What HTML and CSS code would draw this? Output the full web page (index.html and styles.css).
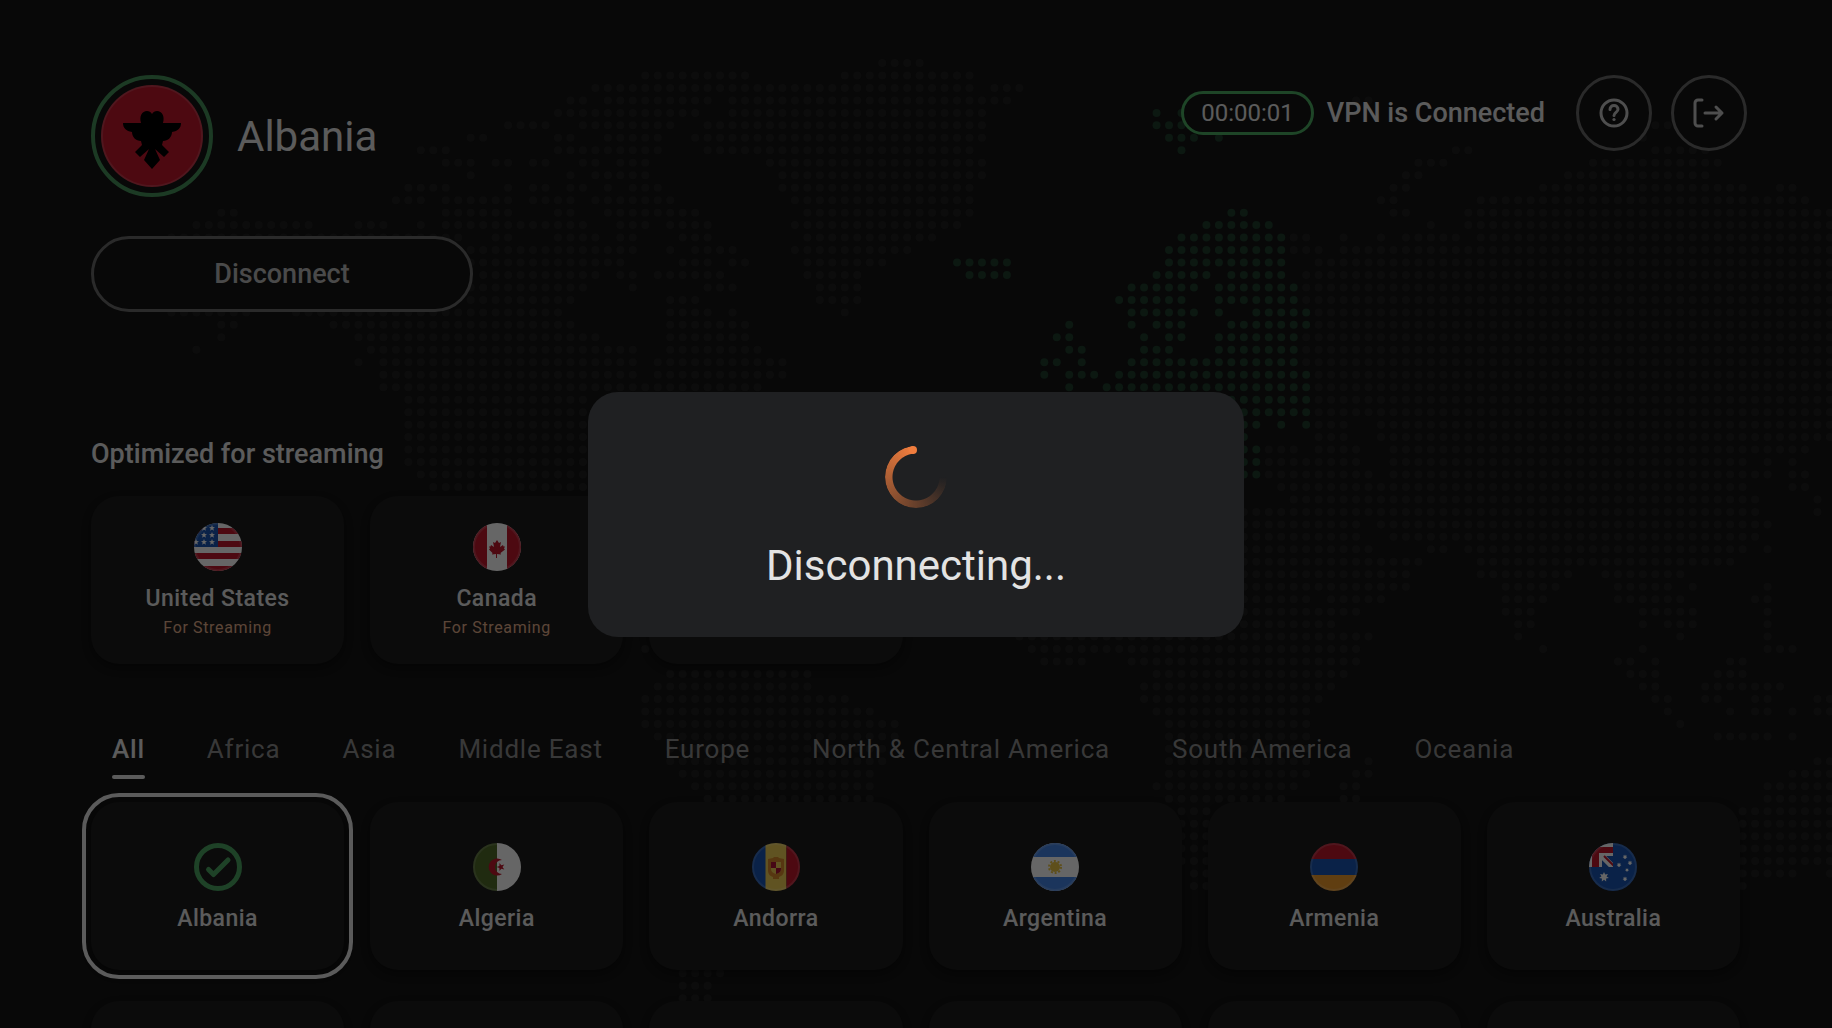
FILE: index.html
```
<!DOCTYPE html>
<html lang="en">
<head>
    <meta charset="utf-8">
    <title>VPN</title>
    <link rel="stylesheet" href="styles.css">
</head>
<body>
    <svg id="map" viewBox="0 0 1832 1028" preserveAspectRatio="xMidYMin slice" aria-hidden="true"></svg>

    <main class="screen">
        <header class="top">
            <div class="location">
                <div class="ring">
                    <svg class="flag-big" viewBox="0 0 102 102">
                        <circle cx="51" cy="51" r="51" fill="#c0172c"/>
                        <path d="M22 38h18c-2-7 1-12 6-12 2 0 4 1 5 3 1-2 3-3 5-3 5 0 8 5 6 12h18c0 5-3 8-9 9 0 5-4 9-9 9l-1 4 7 7-5 5-9-8 5 11-8 9-8-9 5-11-9 8-5-5 7-7-1-4c-5 0-9-4-9-9-6-1-9-4-9-9z"/>
                        <circle cx="51" cy="51" r="50" fill="none" stroke="#fff" stroke-opacity=".15" stroke-width="2"/>
                    </svg>
                </div>
                <h1>Albania</h1>
            </div>
            <div class="status">
                <span class="timer">00:00:01</span>
                <span class="state">VPN is Connected</span>
                <button class="round" aria-label="Help">
                    <svg width="32" height="32" viewBox="0 0 32 32">
                        <circle cx="16" cy="16" r="13"/>
                        <path d="M12 12.500c0-2.500 1.800-4 4-4s4 1.500 4 3.700c0 3-4 3.300-4 6.300"/>
                        <circle class="dot" cx="16" cy="22.500" r="1.600"/>
                    </svg>
                </button>
                <button class="round" aria-label="Log out">
                    <svg width="32" height="32" viewBox="0 0 32 32">
                        <path d="M9 3H5a3 3 0 0 0-3 3v20a3 3 0 0 0 3 3h4M12 16h17M23 10l6 6-6 6"/>
                    </svg>
                </button>
            </div>
        </header>

        <button class="disconnect">Disconnect</button>

        <h2>Optimized for streaming</h2>
        <div class="grid streaming">
            <button class="card">
                <svg class="flag" viewBox="0 0 48 48">
                    <g clip-path="url(#disc)">
                        <path fill="#fff" d="M0 0h48v48H0z"/>
                        <path fill="#c0172c" d="M0 5h48v6H0zM0 18h48v6H0zM0 30h48v6H0zM0 43h48v5H0z"/>
                        <path fill="#1955b4" d="M0 0h24v24H0z"/>
                        <g fill="#fff">
                            <use href="#star" x="10" y="5"/><use href="#star" x="18" y="5"/>
                            <use href="#star" x="10" y="12"/><use href="#star" x="18" y="12"/>
                            <use href="#star" x="2" y="19"/><use href="#star" x="10" y="19"/><use href="#star" x="18" y="19"/>
                        </g>
                    </g>
                    <circle class="rim" cx="24" cy="24" r="23"/>
                </svg>
                <span class="name">United States</span>
                <span class="note">For Streaming</span>
            </button>
            <button class="card">
                <svg class="flag" viewBox="0 0 48 48">
                    <g clip-path="url(#disc)">
                        <path fill="#fff" d="M0 0h48v48H0z"/>
                        <path fill="#c0172c" d="M0 0h14v48H0zM34 0h14v48H34z"/>
                        <path fill="#c0172c" d="M24 17l2 3 2-1-1 5 3-2 .5 1.500 1.500 0-1 2 1 1-4.500 3.500.5 1.500-4-.5v4h-1v-4l-4 .5.5-1.500L16 26.500l1-1-1-2h1.500L18 22l3 2-1-5 2 1z"/>
                    </g>
                    <circle class="rim" cx="24" cy="24" r="23"/>
                </svg>
                <span class="name">Canada</span>
                <span class="note">For Streaming</span>
            </button>
            <button class="card">
                <svg class="flag" viewBox="0 0 48 48">
                    <g clip-path="url(#disc)">
                        <path fill="#1955b4" d="M0 0h48v48H0z"/>
                        <path stroke="#fff" stroke-width="8" d="M0 0l48 48M48 0L0 48M24 0v48M0 24h48"/>
                        <path stroke="#c0172c" stroke-width="4" d="M24 0v48M0 24h48"/>
                    </g>
                </svg>
                <span class="name">United Kingdom</span>
                <span class="note">For Streaming</span>
            </button>
        </div>

        <nav class="tabs">
            <a class="active" href="#">All</a>
            <a href="#">Africa</a>
            <a href="#">Asia</a>
            <a href="#">Middle East</a>
            <a href="#">Europe</a>
            <a href="#">North &amp; Central America</a>
            <a href="#">South America</a>
            <a href="#">Oceania</a>
        </nav>

        <div class="grid">
            <button class="card selected">
                <svg class="flag" viewBox="0 0 48 48" fill="none" stroke="#4ba562" stroke-linecap="round" stroke-linejoin="round">
                    <circle cx="24" cy="24" r="21.500" stroke-width="5"/>
                    <path stroke-width="5" d="M14.500 26.500l5 5L34 17"/>
                </svg>
                <span class="name">Albania</span>
            </button>
            <button class="card">
                <svg class="flag" viewBox="0 0 48 48">
                    <g clip-path="url(#disc)">
                        <path fill="#506b2a" d="M0 0h24v48H0z"/>
                        <path fill="#fff" d="M24 0h24v48H24z"/>
                        <path fill="#c0172c" d="M29 17a8.500 8.500 0 1 0 0 14 7 7 0 1 1 0-14z"/>
                        <path fill="#c0172c" d="M26.500 20l1.800 2.300 3-.8-1.800 2.500 1.800 2.500-3-.8-1.800 2.300-.1-3-2.900-1 2.900-1z"/>
                    </g>
                    <circle class="rim" cx="24" cy="24" r="23"/>
                </svg>
                <span class="name">Algeria</span>
            </button>
            <button class="card">
                <svg class="flag" viewBox="0 0 48 48">
                    <g clip-path="url(#disc)">
                        <path fill="#1955b4" d="M0 0h14v48H0z"/>
                        <path fill="#f0d056" d="M13.500 0h21v48h-21z"/>
                        <path fill="#c0172c" d="M34.500 0H48v48H34.500z"/>
                        <path fill="#d98a2b" d="M21 15l1-1h4l1 1 5 1v11c0 4-2 6-5 7v2h-6v-2c-3-1-5-3-5-7V16z"/>
                        <path fill="#f0d056" d="M19 19h10v7c0 3-2 4-5 5-3-1-5-2-5-5z"/>
                        <path fill="#b01335" d="M19 19h5v6h-5zM24 25h5v1c0 3-2 4-5 5z"/>
                    </g>
                    <circle class="rim" cx="24" cy="24" r="23"/>
                </svg>
                <span class="name">Andorra</span>
            </button>
            <button class="card">
                <svg class="flag" viewBox="0 0 48 48">
                    <g clip-path="url(#disc)">
                        <path fill="#fff" d="M0 0h48v48H0z"/>
                        <path fill="#4585e6" d="M0 0h48v14H0zM0 34h48v14H0z"/>
                        <circle cx="24" cy="24" r="5" fill="#ecc544"/>
                        <circle cx="24" cy="24" r="6" fill="none" stroke="#ecc544" stroke-width="2" stroke-dasharray="2 1.770"/>
                    </g>
                    <circle class="rim" cx="24" cy="24" r="23"/>
                </svg>
                <span class="name">Argentina</span>
            </button>
            <button class="card">
                <svg class="flag" viewBox="0 0 48 48">
                    <g clip-path="url(#disc)">
                        <path fill="#c0172c" d="M0 0h48v16H0z"/>
                        <path fill="#1955b4" d="M0 16h48v16H0z"/>
                        <path fill="#f09c2c" d="M0 32h48v16H0z"/>
                    </g>
                    <circle class="rim" cx="24" cy="24" r="23"/>
                </svg>
                <span class="name">Armenia</span>
            </button>
            <button class="card">
                <svg class="flag" viewBox="0 0 48 48">
                    <g clip-path="url(#disc)">
                        <path fill="#1955b4" d="M0 0h48v48H0z"/>
                        <path fill="#fff" d="M0 0h24v13H13v11H0z"/>
                        <path fill="#c0172c" d="M3 4h21v6H10v14H3z"/>
                        <path stroke="#fff" stroke-width="6" d="M12 12l12 12"/>
                        <path fill="#fff" d="M10 10h14v3H13v11h-3z"/>
                        <path stroke="#c0172c" stroke-width="2" d="M15 13l10 10"/>
                        <path fill="#1955b4" d="M24 10h4v18H10v-4h14z"/>
                        <g fill="#fff">
                            <use href="#star7" transform="translate(15 34)"/>
                            <use href="#star7" transform="translate(36 14) scale(.5)"/>
                            <use href="#star7" transform="translate(30 22) scale(.5)"/>
                            <use href="#star7" transform="translate(41 20) scale(.5)"/>
                            <use href="#star7" transform="translate(38 27) scale(.4)"/>
                            <use href="#star7" transform="translate(36 36) scale(.5)"/>
                        </g>
                    </g>
                    <circle class="rim" cx="24" cy="24" r="23"/>
                </svg>
                <span class="name">Australia</span>
            </button>
            <div class="card"></div>
            <div class="card"></div>
            <div class="card"></div>
            <div class="card"></div>
            <div class="card"></div>
            <div class="card"></div>
        </div>
    </main>

    <div class="overlay">
        <div class="dialog" role="alertdialog" aria-labelledby="message">
            <div class="spinner"></div>
            <p id="message">Disconnecting...</p>
        </div>
    </div>

    <!-- shared flag parts -->
    <svg class="defs" width="0" height="0">
        <defs>
            <clipPath id="disc"><circle cx="24" cy="24" r="24"/></clipPath>
            <path id="star" d="M0-3l.8 2.100 2.200.1-1.700 1.400.6 2.200L0 1.600l-1.900 1.200.6-2.200L-3-.8l2.200-.1z"/>
            <path id="star7" d="M0-5l1.200 2.600 2.700-.7-1.300 2.500L4.900 1.100l-2.800.5.1 2.900L0 2.700l-2.200 1.800.1-2.900-2.800-.5 2.300-1.700-1.300-2.500 2.700.7z"/>
        </defs>
    </svg>

    <script src="map.js"></script>
</body>
</html>
```
FILE: styles.css
```
* {
    box-sizing: border-box;
}

body {
    margin: 0;
    height: 100vh;
    overflow: hidden;
    position: relative;
    background-color: #141414;
    color: #e3e3e3;
    font-family: Roboto, sans-serif;
}

button {
    font-family: inherit;
    color: inherit;
    cursor: pointer;
}

h1, h2, p {
    margin: 0;
}

#map {
    position: absolute;
    top: 0;
    left: 0;
    width: 100%;
    height: 100%;
    fill: #202020;
}

#map .active {
    fill: #1e3c2c;
}

.defs {
    position: absolute;
}

.screen {
    position: relative;
    height: 100vh;
    overflow: hidden;
    padding: 75px 92px 0 91px;
}

.top {
    display: flex;
    justify-content: space-between;
    align-items: flex-start;
}

.location {
    display: flex;
    align-items: center;
    gap: 24px;
}

.ring {
    width: 122px;
    height: 122px;
    padding: 6px;
    border: 4px solid #46915a;
    border-radius: 50%;
}

.flag-big {
    display: block;
    width: 102px;
    height: 102px;
}

h1 {
    padding-top: 2px;
    font-size: 42px;
    line-height: 50px;
    font-weight: 400;
}

.status {
    display: flex;
    align-items: center;
    height: 76px;
    margin-right: -7px;
}

.timer {
    height: 44px;
    padding: 0 17px;
    border: 3px solid #4bac61;
    border-radius: 22px;
    background-color: #141414;
    font-size: 24px;
    line-height: 38px;
}

.state {
    margin: 0 31px 0 13px;
    font-size: 27px;
    line-height: 32px;
    font-weight: 500;
}

.round {
    display: flex;
    align-items: center;
    justify-content: center;
    width: 76px;
    height: 76px;
    padding: 0;
    border: 3px solid #696969;
    border-radius: 50%;
    background-color: #141414;
}

.round + .round {
    margin-left: 19px;
}

.round svg {
    fill: none;
    stroke: #c4c4c4;
    stroke-width: 3;
    stroke-linecap: round;
    stroke-linejoin: round;
}

.round .dot {
    fill: #c4c4c4;
    stroke: none;
}

.disconnect {
    display: block;
    width: 382px;
    height: 76px;
    margin-top: 39px;
    border: 3px solid #696969;
    border-radius: 38px;
    background-color: #141414;
    color: #b8b8b8;
    font-size: 27px;
    font-weight: 500;
}

h2 {
    margin: 126px 0 26px;
    font-size: 27px;
    line-height: 32px;
    font-weight: 500;
}

.grid {
    display: grid;
    grid-template-columns: repeat(6, 1fr);
    gap: 31px 26px;
}

.card {
    display: flex;
    flex-direction: column;
    align-items: center;
    justify-content: center;
    height: 168px;
    padding: 3px 0 0;
    border: none;
    border-radius: 28px;
    background-color: #1c1c1c;
    box-shadow: 0 4px 8px rgba(0, 0, 0, 0.4);
}

.streaming .card {
    padding: 0;
}

.selected {
    outline: 4px solid #e3e3e3;
    outline-offset: 5px;
}

.flag {
    width: 48px;
    height: 48px;
    margin-bottom: 14px;
}

.rim {
    fill: none;
    stroke: #fff;
    stroke-opacity: 0.15;
    stroke-width: 2;
}

.name {
    font-size: 23px;
    line-height: 28px;
    font-weight: 500;
    letter-spacing: 0.02em;
}

.note {
    margin-top: 5px;
    color: #e3af8c;
    font-size: 16px;
    line-height: 20px;
    letter-spacing: 0.04em;
}

.tabs {
    display: flex;
    gap: 62px;
    margin: 69px 0 23px;
    padding-left: 21px;
}

.tabs a {
    color: #8c8c8c;
    font-size: 26px;
    line-height: 32px;
    letter-spacing: 0.03em;
    text-decoration: none;
}

.tabs a::after {
    content: "";
    display: block;
    height: 4px;
    margin-top: 10px;
    border-radius: 2px;
}

.tabs .active {
    color: #e3e3e3;
    font-weight: 500;
}

.tabs .active::after {
    background-color: #e3e3e3;
}

.overlay {
    position: fixed;
    inset: 0;
    display: flex;
    align-items: center;
    justify-content: center;
    background-color: rgba(0, 0, 0, 0.6);
}

.dialog {
    display: flex;
    flex-direction: column;
    align-items: center;
    gap: 33px;
    width: 656px;
    padding: 54px 40px 46px;
    border-radius: 30px;
    background-color: #1f2022;
    color: #e3e3e3;
    font-size: 42px;
    line-height: 50px;
}

.spinner {
    position: relative;
    width: 62px;
    height: 62px;
}

.spinner::before {
    content: "";
    position: absolute;
    inset: 0;
    border-radius: 50%;
    background: conic-gradient(from 90deg, rgba(240, 125, 62, 0), #f07d3e 264deg, transparent 264deg);
    -webkit-mask: radial-gradient(circle, transparent 23px, #000 24px);
    mask: radial-gradient(circle, transparent 23px, #000 24px);
}

/* round tip of the arc */
.spinner::after {
    content: "";
    position: absolute;
    top: 0;
    left: 24px;
    width: 8px;
    height: 8px;
    border-radius: 50%;
    background-color: #f07d3e;
}
```
FILE: map.js
```
// dots of the world map: one line per row, each entry is a column or a range of columns
const step = 12.47;
const world = `70-73
51-59 67-77
47-77 79-81
45-46 48-56 58-80 108-109
44-55 58-78
40-43 46-53 56-78 132-133
37-38 44-45 48-52 55-78 131
33-35 44-52 56-77 116-117 132-136
35-37 39-40 42-43 46-47 49-51 61-78 113-115 127-137
37 45 47-51 62-78 112-113 125-136
32-35 40 42-43 45-46 48 50-52 62-77 111-112 123-139 142-143
31-33 35-40 42-45 47-53 63-77 110-111 118-144
17-18 35-40 44-45 48-55 64-77 111-112 117-146
15-24 28-30 33 35-46 49-51 53-56 63-76 114 117-146
13-36 39-40 44-47 49-50 54-56 64-74 103-104 107 110 112-116 118-146
37-50 53 55-58 63-72 103-105 107-146
37-49 54-56 58-59 64-70 105-146
38-47 49-50 52-57 64-68 104-146
37-46 50 56-58 65-68 104-146
37-45 53-55 65-68 104-146
13-19 23-44 53-56 58 67 105-146
17-18 26-45 53-59 105-146
17 28-47 53-59 104-146
15 29-50 53-60 104-146
28 30-50 52-62 104-146
30-50 52-62 105-146
30-60 105-146
32-46 105-146
32-46 105-146
32-46 105-107 110-146
32-46 105-107 110-146
32-46 101-103 105-108 111-144
32-46 101-108 111-139 141 143
33-46 101-109 111-141 143-144
34-46 102-139 143-144
103-140 145
99-140 145
99-108 110-141
99-108 111-140
99-109 114-115 117-139 141
99-113 118-138
99-112 118-125 128-134
99-112 120-124 129-133 135 141
99-104 106-110 120-123 129-134 140-141
99-108 120-122 131-135 141
98-106 121-122 131 133-135 141
81-109 121 134 141
51 82-108 123 131 141-143
83-86 90-108 129-130 132 138-139
53-64 92-107 130-132 137-139
52-64 91-106 131-132 136-142
51-67 91-105 132-133 136-137 140-141 145-146
51-69 92-104 133 138 140-141 143 145-146
51-71 93-104 134
52-71 93-104 137-141 143
53-70 93-104
53-70 93-104 109 145-146
54-69 93-104 108-109 143-146
55-69 92-103 107-108 141-146
56-69 93-102 107-108 141-146
94-96 139-146
94-96 139-146
94-96 139-146
94-96 139-146
94-96 139-146
95-96 139-143 146
95-96 139






54-57
54-56
54-56`.split("\n");

const europe = {
    4: "92 94", 5: "92-94", 6: "93-95 97", 7: "94",
    12: "98-99", 13: "96-101", 14: "94-102", 15: "93-102",
    16: "76-80 93-102", 17: "77-80 92-96 98-102", 18: "90-95 97-103",
    19: "89-94 97-103", 20: "90-95 97 100-104", 21: "85 90 92-94 98-104",
    22: "84-85 91 93-94 97-103", 23: "85-86 91-93 97-103", 24: "83-84 86 90-103",
    25: "83 85-87 89-104", 26: "85 88-104", 27: "98-104", 28: "98-104",
    29: "99-100 102 104", 30: "99", 31: "99-100", 32: "99-100", 33: "99-100"
};

function dots(ranges, row) {
    let out = "";
    ranges.split(" ").filter(Boolean).forEach((range) => {
        const [from, to = from] = range.split("-").map(Number);
        for (let col = from; col <= to; col++) {
            out += `<circle cx="${9.3 + col * step}" cy="${63 + row * step}" r="4"/>`;
        }
    });
    return out;
}

let active = "";
for (const row in europe) {
    active += dots(europe[row], Number(row));
}

document.getElementById("map").innerHTML = world.map(dots).join("") + `<g class="active">${active}</g>`;
```
